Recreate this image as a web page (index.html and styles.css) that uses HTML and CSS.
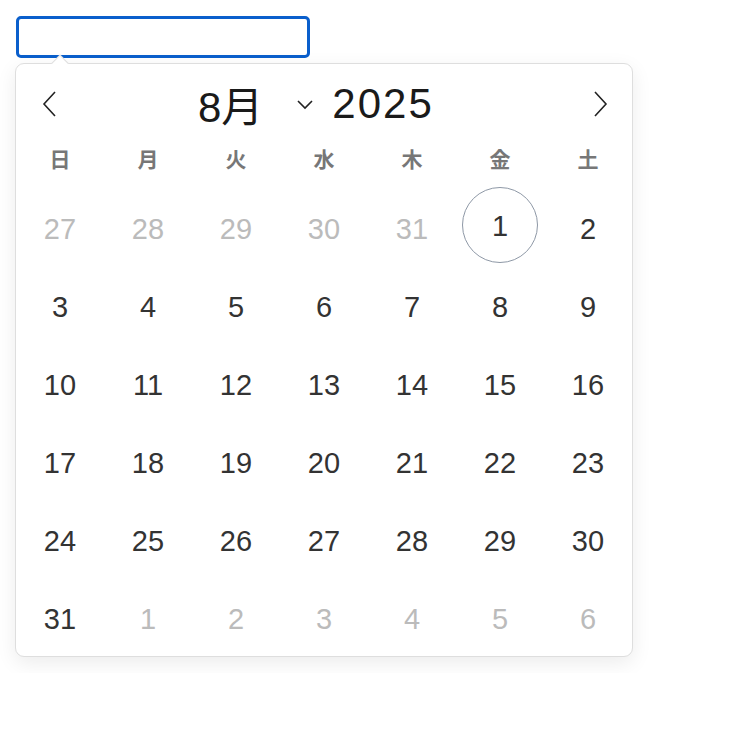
FILE: index.html
```html
<!DOCTYPE html>
<html lang="ja">
<head>
    <meta charset="UTF-8">
    <title>日付選択</title>
    <link rel="stylesheet" href="styles.css">
</head>
<body>
    <div class="picker">
        <input type="text" class="date-input">
        <div class="popup">
            <div class="popup-header">
                <button class="nav-btn" aria-label="前の月">
                    <svg width="16" height="26" viewBox="0 0 16 26"><path d="M13 1 L2 13 L13 25" fill="none" stroke="#222" stroke-width="1.6"/></svg>
                </button>
                <div class="title">
                    <span class="month">8月</span>
                    <svg class="caret" width="18" height="12" viewBox="0 0 18 12"><path d="M2 3 L9 10 L16 3" fill="none" stroke="#222" stroke-width="1.6"/></svg>
                    <span class="year">2025</span>
                </div>
                <button class="nav-btn next" aria-label="次の月">
                    <svg width="16" height="26" viewBox="0 0 16 26"><path d="M3 1 L14 13 L3 25" fill="none" stroke="#222" stroke-width="1.6"/></svg>
                </button>
            </div>
            <div class="weekdays">
                <span>日</span><span>月</span><span>火</span><span>水</span><span>木</span><span>金</span><span>土</span>
            </div>
            <div class="days">
                <span class="day other">27</span>
                <span class="day other">28</span>
                <span class="day other">29</span>
                <span class="day other">30</span>
                <span class="day other">31</span>
                <span class="day today">1</span>
                <span class="day">2</span>
                <span class="day">3</span>
                <span class="day">4</span>
                <span class="day">5</span>
                <span class="day">6</span>
                <span class="day">7</span>
                <span class="day">8</span>
                <span class="day">9</span>
                <span class="day">10</span>
                <span class="day">11</span>
                <span class="day">12</span>
                <span class="day">13</span>
                <span class="day">14</span>
                <span class="day">15</span>
                <span class="day">16</span>
                <span class="day">17</span>
                <span class="day">18</span>
                <span class="day">19</span>
                <span class="day">20</span>
                <span class="day">21</span>
                <span class="day">22</span>
                <span class="day">23</span>
                <span class="day">24</span>
                <span class="day">25</span>
                <span class="day">26</span>
                <span class="day">27</span>
                <span class="day">28</span>
                <span class="day">29</span>
                <span class="day">30</span>
                <span class="day">31</span>
                <span class="day other">1</span>
                <span class="day other">2</span>
                <span class="day other">3</span>
                <span class="day other">4</span>
                <span class="day other">5</span>
                <span class="day other">6</span>
            </div>
        </div>
    </div>
</body>
</html>
```

FILE: styles.css
```css
body {
    margin: 0;
    font-family: 'Liberation Sans', 'Noto Sans CJK JP', sans-serif;
    background: #fff;
    color: #333;
}
.picker {
    padding: 16px 15px;
}
.date-input {
    display: block;
    box-sizing: border-box;
    width: 294px;
    height: 42px;
    margin-left: 1px;
    border: 3px solid #0a5fcc;
    border-radius: 5px;
    outline: none;
}
.popup {
    position: relative;
    box-sizing: border-box;
    width: 618px;
    height: 594px;
    margin-top: 5px;
    border: 1px solid #dedede;
    border-radius: 9px;
    background: #fff;
    box-shadow: 0 6px 20px rgba(0, 0, 0, 0.08);
}
/* little arrow pointing at the input */
.popup::before {
    content: '';
    position: absolute;
    top: -7px;
    left: 38px;
    width: 11px;
    height: 11px;
    background: #fff;
    border-left: 1px solid #dedede;
    border-top: 1px solid #dedede;
    transform: rotate(45deg);
}
.popup-header {
    display: flex;
    align-items: center;
    height: 79px;
    padding: 0 24px 0 26px;
}
.nav-btn {
    display: flex;
    border: none;
    background: none;
    padding: 0;
    cursor: pointer;
}
.nav-btn.next {
    margin-left: auto;
}
.title {
    display: flex;
    align-items: center;
    color: #1a1a1a;
    font-size: 42px;
    margin-left: 140px;
}
.year {
    letter-spacing: 2px;
}
.caret {
    margin: 0 18px 0 33px;
}
.weekdays {
    display: grid;
    grid-template-columns: repeat(7, 88px);
    height: 28px;
    align-items: center;
    text-align: center;
    font-size: 21px;
    font-weight: bold;
    color: #777;
}
.days {
    display: grid;
    grid-template-columns: repeat(7, 88px);
    grid-auto-rows: 78px;
    margin-top: 19px;
}
.day {
    display: flex;
    align-items: center;
    justify-content: center;
    font-size: 29px;
    color: #333;
}
.day.other {
    color: #bbb;
}
.day.today {
    width: 76px;
    height: 76px;
    margin: -3px auto 0;
    box-sizing: border-box;
    padding-top: 3px;
    border: 1.5px solid #8e98a6;
    border-radius: 50%;
}
```
